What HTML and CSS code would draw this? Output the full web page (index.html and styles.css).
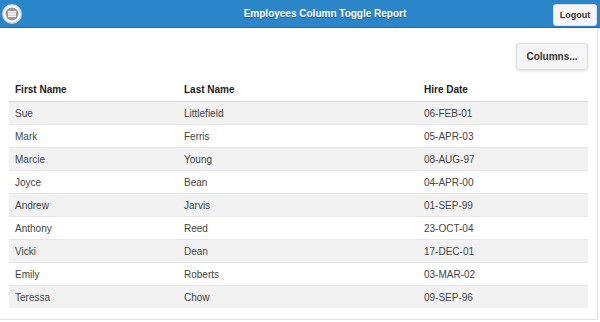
FILE: index.html
```html
<!DOCTYPE html>
<html lang="en">
<head>
    <meta charset="UTF-8">
    <meta name="viewport" content="width=device-width, initial-scale=1.0">
    <title>Employees Column Toggle Report</title>
    <link rel="stylesheet" href="styles.css">
</head>
<body>
    <div class="header">
        <a class="menu-btn" href="#" title="Menu">
            <svg width="20" height="20" viewBox="0 0 20 20">
                <circle cx="10" cy="10" r="10" fill="#c9d3dc"/>
                <circle cx="10" cy="10" r="8.5" fill="#ffffff"/>
                <circle cx="10" cy="10" r="6.5" fill="#9a9a9a"/>
                <rect x="6" y="7" width="8" height="1.6" fill="#fff"/>
                <rect x="6" y="9.2" width="8" height="1.6" fill="#fff"/>
                <rect x="6" y="11.4" width="8" height="1.6" fill="#fff"/>
            </svg>
        </a>
        <h1>Employees Column Toggle Report</h1>
        <a class="btn logout-btn" href="#">Logout</a>
    </div>
    <div class="page">
        <div class="toolbar">
            <a class="btn columns-btn" href="#">Columns...</a>
        </div>
        <table class="report">
            <thead>
                <tr>
                    <th class="col-first">First Name</th>
                    <th class="col-last">Last Name</th>
                    <th class="col-date">Hire Date</th>
                </tr>
            </thead>
            <tbody>
                <tr><td>Sue</td><td>Littlefield</td><td>06-FEB-01</td></tr>
                <tr><td>Mark</td><td>Ferris</td><td>05-APR-03</td></tr>
                <tr><td>Marcie</td><td>Young</td><td>08-AUG-97</td></tr>
                <tr><td>Joyce</td><td>Bean</td><td>04-APR-00</td></tr>
                <tr><td>Andrew</td><td>Jarvis</td><td>01-SEP-99</td></tr>
                <tr><td>Anthony</td><td>Reed</td><td>23-OCT-04</td></tr>
                <tr><td>Vicki</td><td>Dean</td><td>17-DEC-01</td></tr>
                <tr><td>Emily</td><td>Roberts</td><td>03-MAR-02</td></tr>
                <tr><td>Teressa</td><td>Chow</td><td>09-SEP-96</td></tr>
            </tbody>
        </table>
    </div>
</body>
</html>
```

FILE: styles.css
```css
body {
    margin: 0;
    font-family: 'Liberation Sans', Arial, sans-serif;
    background-color: #fff;
    color: #333;
}
.header {
    display: flex;
    align-items: center;
    height: 28px;
    padding-left: 2px;
    background-color: #2a86c8;
    border-bottom: 1px solid #1f6aa3;
    box-sizing: border-box;
}
.header h1 {
    flex: 1;
    margin: 0;
    padding-left: 75px;
    color: #fff;
    font-size: 10px;
    font-weight: bold;
    text-align: center;
    text-shadow: 0 1px 0 #1f5f93;
}
.menu-btn {
    display: flex;
    width: 20px;
    height: 20px;
    margin-top: 1px;
}
.btn {
    display: flex;
    align-items: center;
    justify-content: center;
    background-color: #f6f6f6;
    border: 1px solid #dddddd;
    border-radius: 3px;
    color: #333;
    font-weight: bold;
    text-decoration: none;
    box-sizing: border-box;
}
.logout-btn {
    width: 44px;
    height: 22px;
    margin-top: 2px;
    margin-right: 3px;
    font-size: 9px;
}
.page {
    width: 598px;
    height: 292px;
    padding: 15px 9px 0 9px;
    border-right: 1px solid #e2e2e2;
    border-bottom: 1px solid #e2e2e2;
    box-sizing: border-box;
}
.toolbar {
    display: flex;
    justify-content: flex-end;
    margin-bottom: 8px;
}
.columns-btn {
    width: 72px;
    height: 27px;
    font-size: 10px;
    border-radius: 4px;
    box-shadow: 0 1px 3px rgba(0, 0, 0, 0.15);
}
.report {
    width: 579px;
    border-collapse: collapse;
    font-size: 10px;
}
.report th, .report td {
    padding: 0 6px;
    height: 22px;
    text-align: left;
}
.report th {
    height: 23px;
    font-weight: bold;
    color: #222;
    border-bottom: 1px solid #d6d6d6;
}
.report td {
    color: #444;
    border-bottom: 1px solid #e6e6e6;
}
.report tbody tr:nth-child(odd) td {
    background-color: #f2f2f2;
}
.report tbody tr:last-child td {
    border-bottom: none;
}
.col-first {
    width: 157px;
}
.col-last {
    width: 228px;
}
```
